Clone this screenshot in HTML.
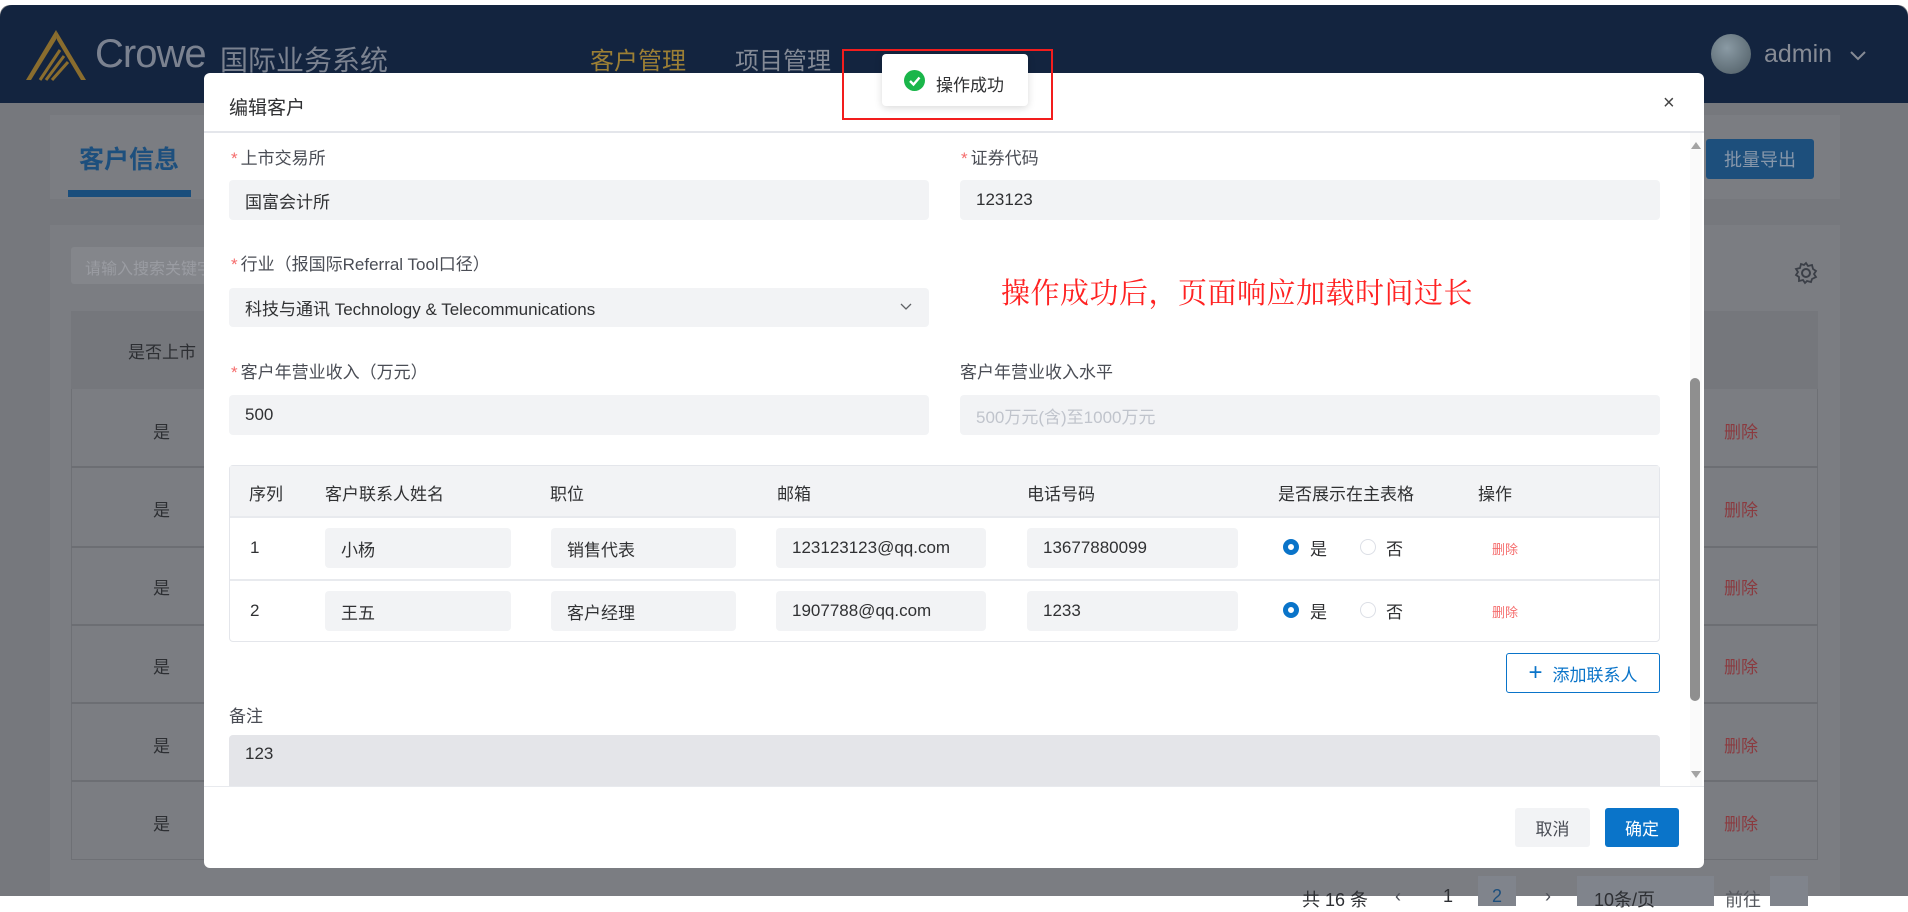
<!DOCTYPE html>
<html><head><meta charset="utf-8"><style>
*{margin:0;padding:0;box-sizing:border-box}
body{width:1908px;height:896px;overflow:hidden;background:#fff;font-family:"Liberation Sans","Noto Sans CJK SC",sans-serif;position:relative;color:#303133}
.a{position:absolute}
.bg{left:0;top:5px;width:1908px;height:891px;background:#76787d;border-radius:10px 10px 0 0;overflow:hidden}
.hdr{left:0;top:5px;width:1908px;height:98px;background:#13243f;border-radius:12px 12px 0 0}
.card{background:#7b7d82}
.inp{background:#f2f3f5;border-radius:4px;font-size:17px;color:#303133;padding-left:16px;display:flex;align-items:center}
.lbl{font-size:17px;color:#4a4d55}
.lbl b{color:#f56c6c;font-weight:normal;margin-right:3px}
.th{font-size:17px;color:#303133;top:480px}
.cell{font-size:17px;color:#303133}
.s{left:153px;font-size:17px;color:#2d2f33}
.d{left:1724px;font-size:17px;color:#8b3a3f}
</style></head><body>
<div class="a bg"></div>
<div class="a hdr"></div>
<svg class="a" style="left:24px;top:28px" width="64" height="54" viewBox="0 0 64 54"><path d="M32 2 L62 52 L57 52 L33 12 Z" fill="#8a6d2e"/><path d="M32 2 L2 52 L7 52 L33 10 Z" fill="#8a6d2e"/><path d="M36 22 L16 52 M40 28 L22 52 M44 34 L28 52" stroke="#8a6d2e" stroke-width="3"/></svg>
<div class="a" style="left:95px;top:32px;font-size:40px;color:#7b8290;letter-spacing:-1px">Crowe</div>
<div class="a" style="left:220px;top:39px;font-size:28px;color:#7b8290">国际业务系统</div>
<div class="a" style="left:590px;top:41px;font-size:24px;color:#9c7f35">客户管理</div>
<div class="a" style="left:735px;top:41px;font-size:24px;color:#848a96">项目管理</div>
<div class="a" style="left:1711px;top:34px;width:40px;height:40px;border-radius:50%;background:radial-gradient(circle at 40% 35%,#8a9aa4,#4d5b63)"></div>
<div class="a" style="left:1764px;top:40px;font-size:25px;color:#868b95">admin</div>
<svg class="a" style="left:1850px;top:50px" width="16" height="12"><path d="M1 2 L8 9 L15 2" stroke="#868b95" stroke-width="2" fill="none"/></svg>

<div class="a card" style="left:50px;top:115px;width:1790px;height:84px"></div>
<div class="a" style="left:79px;top:140px;font-size:25px;font-weight:bold;color:#1d4f7d">客户信息</div>
<div class="a" style="left:68px;top:190px;width:123px;height:7px;background:#1a4e7c"></div>
<div class="a" style="left:1706px;top:139px;width:108px;height:40px;background:#1d4f7c;border-radius:3px;color:#8797aa;font-size:18px;display:flex;align-items:center;justify-content:center">批量导出</div>
<div class="a card" style="left:50px;top:225px;width:1790px;height:671px"></div>
<div class="a" style="left:71px;top:247px;width:200px;height:37px;background:#84868b;border-radius:3px;color:#9a9ca2;font-size:16px;padding:8px 0 0 14px">请输入搜索关键字</div>
<svg class="a" style="left:1794px;top:261px" width="24" height="24" viewBox="0 0 24 24"><circle cx="12" cy="12" r="4" stroke="#3b3f47" stroke-width="2" fill="none"/><path d="M12 2 L14 5 L18 4 L19 8 L22 10 L20 13 L22 16 L18 18 L17 21 L13 20 L11 22 L9 19 L5 20 L5 16 L2 14 L4 11 L2 8 L6 7 L7 3 L10 4 Z" stroke="#3b3f47" stroke-width="1.8" fill="none"/></svg>
<div class="a" style="left:71px;top:311px;width:1747px;height:549px;background:#7b7d82;border:1px solid #6e7075"></div>
<div class="a" style="left:71px;top:311px;width:1747px;height:78px;background:#75777c"></div>
<div class="a" style="left:128px;top:338px;font-size:17px;color:#2d2f33">是否上市</div>
<div class="a" style="left:71px;top:466px;width:1747px;height:2px;background:#6c6e73"></div>
<div class="a" style="left:71px;top:546px;width:1747px;height:2px;background:#6c6e73"></div>
<div class="a" style="left:71px;top:624px;width:1747px;height:2px;background:#6c6e73"></div>
<div class="a" style="left:71px;top:702px;width:1747px;height:2px;background:#6c6e73"></div>
<div class="a" style="left:71px;top:780px;width:1747px;height:2px;background:#6c6e73"></div>
<div class="a s" style="top:418px">是</div><div class="a d" style="top:418px">删除</div>
<div class="a s" style="top:496px">是</div><div class="a d" style="top:496px">删除</div>
<div class="a s" style="top:574px">是</div><div class="a d" style="top:574px">删除</div>
<div class="a s" style="top:653px">是</div><div class="a d" style="top:653px">删除</div>
<div class="a s" style="top:732px">是</div><div class="a d" style="top:732px">删除</div>
<div class="a s" style="top:810px">是</div><div class="a d" style="top:810px">删除</div>
<div class="a" style="left:1302px;top:886px;font-size:18px;color:#2d2f33">共 16 条</div>
<div class="a" style="left:1395px;top:886px;font-size:18px;color:#4a4d55">‹</div>
<div class="a" style="left:1443px;top:886px;font-size:18px;color:#2d2f33">1</div>
<div class="a" style="left:1478px;top:876px;width:38px;height:30px;background:#80848c"></div>
<div class="a" style="left:1492px;top:886px;font-size:18px;color:#1d4f7d">2</div>
<div class="a" style="left:1545px;top:886px;font-size:18px;color:#4a4d55">›</div>
<div class="a" style="left:1577px;top:876px;width:137px;height:30px;background:#80848c"></div>
<div class="a" style="left:1594px;top:886px;font-size:18px;color:#2d2f33">10条/页</div>
<div class="a" style="left:1725px;top:886px;font-size:18px;color:#55585e">前往</div>
<div class="a" style="left:1770px;top:876px;width:38px;height:30px;background:#80848c"></div>

<!-- modal -->
<div class="a" style="left:204px;top:73px;width:1500px;height:795px;background:#fff;border-radius:6px"></div>
<div class="a" style="left:229px;top:93px;font-size:19px;color:#303133">编辑客户</div>
<div class="a" style="left:1663px;top:92px;font-size:20px;color:#444">×</div>
<div class="a" style="left:204px;top:131px;width:1500px;height:2px;background:#e4e6eb"></div>

<div class="a lbl" style="left:231px;top:144px"><b>*</b>上市交易所</div>
<div class="a inp" style="left:229px;top:180px;width:700px;height:40px">国富会计所</div>
<div class="a lbl" style="left:961px;top:144px"><b>*</b>证券代码</div>
<div class="a inp" style="left:960px;top:180px;width:700px;height:40px">123123</div>

<div class="a lbl" style="left:231px;top:250px"><b>*</b>行业（报国际Referral Tool口径）</div>
<div class="a inp" style="left:229px;top:288px;width:700px;height:39px">科技与通讯 Technology &amp; Telecommunications</div>
<svg class="a" style="left:900px;top:303px" width="12" height="8"><path d="M1 1 L6 6 L11 1" stroke="#606266" stroke-width="1.3" fill="none"/></svg>
<div class="a" style="left:1001px;top:271px;font-size:29px;color:#f22;font-family:'Noto Serif CJK SC',serif;letter-spacing:0.5px">操作成功后，页面响应加载时间过长</div>

<div class="a lbl" style="left:231px;top:358px"><b>*</b>客户年营业收入（万元）</div>
<div class="a inp" style="left:229px;top:395px;width:700px;height:40px">500</div>
<div class="a lbl" style="left:960px;top:358px">客户年营业收入水平</div>
<div class="a inp" style="left:960px;top:395px;width:700px;height:40px;color:#c0c4cc">500万元(含)至1000万元</div>

<div class="a" style="left:229px;top:465px;width:1431px;height:177px;border:1px solid #e4e6eb;border-radius:4px"></div>
<div class="a" style="left:230px;top:466px;width:1429px;height:50px;background:#f2f3f5"></div>
<div class="a" style="left:230px;top:516px;width:1429px;height:2px;background:#e8eaee"></div>
<div class="a" style="left:230px;top:579px;width:1429px;height:2px;background:#e8eaee"></div>
<div class="a th" style="left:249px">序列</div>
<div class="a th" style="left:325px">客户联系人姓名</div>
<div class="a th" style="left:550px">职位</div>
<div class="a th" style="left:777px">邮箱</div>
<div class="a th" style="left:1027px">电话号码</div>
<div class="a th" style="left:1278px">是否展示在主表格</div>
<div class="a th" style="left:1478px">操作</div>

<div class="a cell" style="left:250px;top:538px">1</div>
<div class="a inp" style="left:325px;top:528px;width:186px;height:40px">小杨</div>
<div class="a inp" style="left:551px;top:528px;width:185px;height:40px">销售代表</div>
<div class="a inp" style="left:776px;top:528px;width:210px;height:40px">123123123@qq.com</div>
<div class="a inp" style="left:1027px;top:528px;width:211px;height:40px">13677880099</div>
<div class="a cell" style="left:250px;top:601px">2</div>
<div class="a inp" style="left:325px;top:591px;width:186px;height:40px">王五</div>
<div class="a inp" style="left:551px;top:591px;width:185px;height:40px">客户经理</div>
<div class="a inp" style="left:776px;top:591px;width:210px;height:40px">1907788@qq.com</div>
<div class="a inp" style="left:1027px;top:591px;width:211px;height:40px">1233</div>

<div class="a" style="left:1283px;top:539px;width:16px;height:16px;border-radius:50%;border:5px solid #0a74c9;background:#fff"></div>
<div class="a cell" style="left:1310px;top:535px">是</div>
<div class="a" style="left:1360px;top:539px;width:16px;height:16px;border-radius:50%;border:1px solid #dcdfe6"></div>
<div class="a cell" style="left:1386px;top:535px">否</div>
<div class="a" style="left:1492px;top:539px;font-size:13px;color:#f56c6c">删除</div>
<div class="a" style="left:1283px;top:602px;width:16px;height:16px;border-radius:50%;border:5px solid #0a74c9;background:#fff"></div>
<div class="a cell" style="left:1310px;top:598px">是</div>
<div class="a" style="left:1360px;top:602px;width:16px;height:16px;border-radius:50%;border:1px solid #dcdfe6"></div>
<div class="a cell" style="left:1386px;top:598px">否</div>
<div class="a" style="left:1492px;top:602px;font-size:13px;color:#f56c6c">删除</div>

<div class="a" style="left:1506px;top:653px;width:154px;height:40px;border:1px solid #0a74c9;border-radius:3px;color:#0a74c9;font-size:17px;display:flex;align-items:center;justify-content:center"><span style="font-size:24px;margin-right:10px;line-height:1">+</span>添加联系人</div>

<div class="a lbl" style="left:229px;top:702px">备注</div>
<div class="a" style="left:229px;top:735px;width:1431px;height:52px;background:#e4e5e9;border-radius:4px 4px 0 0;font-size:17px;padding:9px 0 0 16px">123</div>

<div class="a" style="left:1690px;top:133px;width:12px;height:654px;background:#fafafa"></div>
<svg class="a" style="left:1690px;top:140px" width="12" height="10"><path d="M1 9 L6 2 L11 9 Z" fill="#a3a3a3"/></svg>
<svg class="a" style="left:1690px;top:770px" width="12" height="10"><path d="M1 1 L6 8 L11 1 Z" fill="#a3a3a3"/></svg>
<div class="a" style="left:1690px;top:378px;width:10px;height:323px;background:#8f8f8f;border-radius:5px"></div>

<div class="a" style="left:204px;top:786px;width:1500px;height:1px;background:#e8eaee"></div>
<div class="a" style="left:1515px;top:808px;width:75px;height:39px;background:#f2f3f5;border-radius:3px;font-size:17px;color:#4a4d55;display:flex;align-items:center;justify-content:center">取消</div>
<div class="a" style="left:1605px;top:808px;width:74px;height:39px;background:#0a74c9;border-radius:3px;font-size:17px;color:#fff;display:flex;align-items:center;justify-content:center">确定</div>

<!-- toast -->
<div class="a" style="left:882px;top:54px;width:146px;height:52px;background:#fff;border-radius:4px;box-shadow:0 2px 8px rgba(0,0,0,.15)"></div>
<div class="a" style="left:904px;top:70px;width:21px;height:21px;border-radius:50%;background:#1ab64a"></div>
<svg class="a" style="left:904px;top:70px" width="21" height="21"><path d="M6 11 L9.5 14.5 L15.5 7.5" stroke="#fff" stroke-width="2.4" fill="none"/></svg>
<div class="a" style="left:936px;top:71px;font-size:17px;color:#303133">操作成功</div>
<div class="a" style="left:842px;top:49px;width:211px;height:71px;border:2px solid #f21d1d"></div>
</body></html>
